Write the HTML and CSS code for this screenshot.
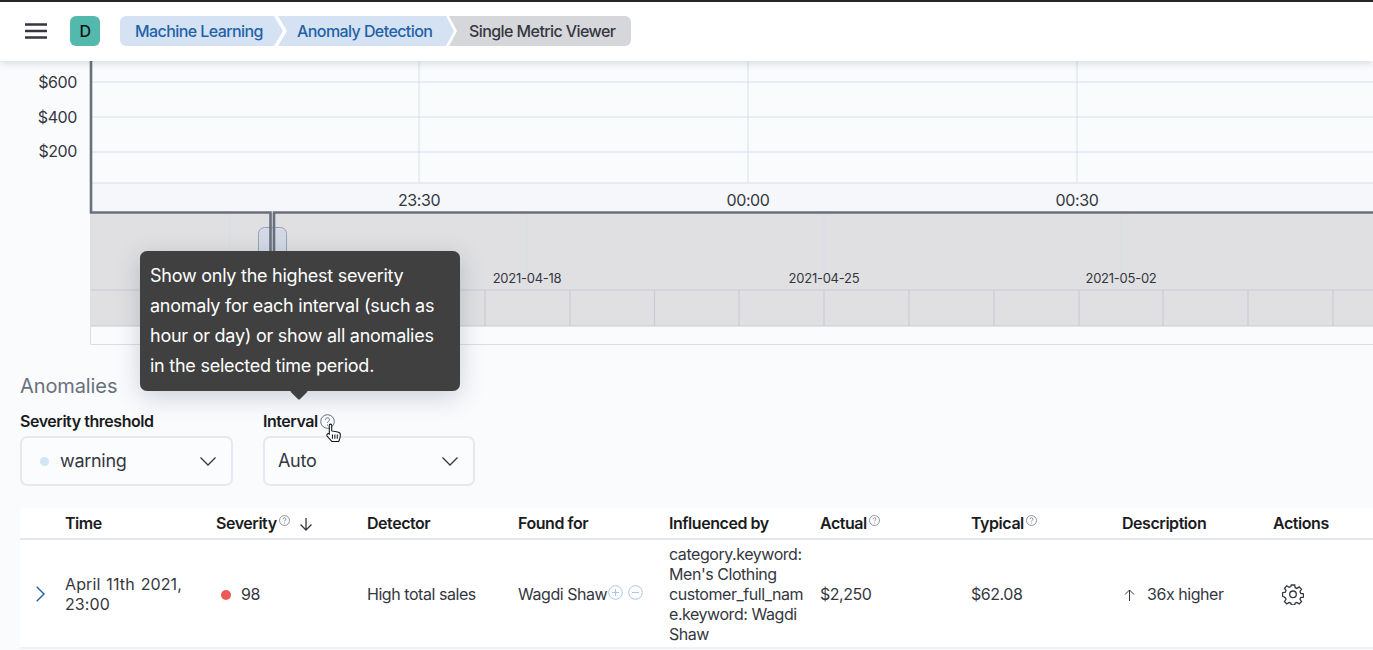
FILE: index.html
```html
<!DOCTYPE html>
<html lang="en">
<head>
  <meta charset="UTF-8" />
  <meta name="viewport" content="width=device-width, initial-scale=1" />
  <title>Single Metric Viewer</title>
  <link rel="stylesheet" href="styles.css">
</head>
<body>
  <header class="topbar">
    <svg class="menu-icon" width="22" height="16" viewBox="0 0 22 16"><path d="M0 1.500h22M0 8h22M0 14.500h22" /></svg>
    <div class="avatar">D</div>
    <nav class="crumbs">
      <a class="crumb crumb-first">Machine Learning</a>
      <a class="crumb crumb-mid">Anomaly Detection</a>
      <span class="crumb crumb-last">Single Metric Viewer</span>
    </nav>
  </header>

  <section class="chart">
    <svg class="chart-svg" width="1373" height="284" viewBox="0 61 1373 284">
      <rect class="ctx-bg" x="90" y="213" width="1283" height="113" />
      <rect class="axis-bg" x="91" y="183" width="1282" height="29" />
      <rect class="plot-bg" x="91" y="61" width="1282" height="122" />

      <path class="grid" d="M91 82H1373M91 117H1373M91 152H1373M91 183H1373M419 61V183M748 61V183M1077 61V183" />
      <path class="grid-faint" d="M230 213V290M527 213V290M824 213V290M1121 213V290" />
      <path class="grid-cell" d="M90 290H1373M90 326H1373M145 290V326M230 290V326M315 290V326M400 290V326M485 290V326M570 290V326M654.500 290V326M739 290V326M824 290V326M909 290V326M994 290V326M1079 290V326M1163 290V326M1248 290V326M1333 290V326" />
      <path class="grid" d="M90.500 290V344.500H1373" />

      <text class="tick tick-y" x="77" y="88">$600</text>
      <text class="tick tick-y" x="77" y="123">$400</text>
      <text class="tick tick-y" x="77" y="157">$200</text>
      <text class="tick tick-x" x="419" y="206">23:30</text>
      <text class="tick tick-x" x="748" y="206">00:00</text>
      <text class="tick tick-x" x="1077" y="206">00:30</text>
      <text class="tick-small" x="527" y="283">2021-04-18</text>
      <text class="tick-small" x="824" y="283">2021-04-25</text>
      <text class="tick-small" x="1121" y="283">2021-05-02</text>

      <rect class="handle" x="258.500" y="227.500" width="28" height="40" rx="6" />
      <path class="axis" d="M91 61V212.500H270.500V270M274 270V212.500H1373" />
    </svg>
  </section>

  <section class="anomalies">
    <h2 class="title">Anomalies</h2>
    <div class="filters">
      <div class="field">
        <label class="field-label">Severity threshold</label>
        <div class="select">
          <span class="dot-warning"></span>
          <span class="select-value">warning</span>
          <svg class="chevron" width="16" height="9" viewBox="0 0 16 9"><path d="M.5.500 8 8 15.500.5" /></svg>
        </div>
      </div>
      <div class="field">
        <label class="field-label">Interval<svg class="help help-big" width="15" height="15" viewBox="0 0 15 15"><circle cx="7.500" cy="7.500" r="6.800" /><path d="M5.500 5.800c0-1.200.9-2 2-2s2 .8 2 1.900c0 1.500-2 1.500-2 3.200M7.500 10.500v1" /></svg></label>
        <div class="select select-auto">
          <span class="select-value">Auto</span>
          <svg class="chevron" width="16" height="9" viewBox="0 0 16 9"><path d="M.5.500 8 8 15.500.5" /></svg>
        </div>
      </div>
    </div>

    <table class="results">
      <thead>
        <tr>
          <th class="col-toggle"></th>
          <th>Time</th>
          <th>Severity<svg class="help" width="11" height="11" viewBox="0 0 15 15"><circle cx="7.500" cy="7.500" r="6.800" /><path d="M5.500 5.800c0-1.200.9-2 2-2s2 .8 2 1.900c0 1.500-2 1.500-2 3.200M7.500 10.500v1" /></svg><svg class="sort-icon" width="14" height="14" viewBox="0 0 14 14"><path d="M7 1v12M1.500 7.500 7 13l5.500-5.500" /></svg></th>
          <th>Detector</th>
          <th>Found for</th>
          <th>Influenced by</th>
          <th>Actual<svg class="help" width="11" height="11" viewBox="0 0 15 15"><circle cx="7.500" cy="7.500" r="6.800" /><path d="M5.500 5.800c0-1.200.9-2 2-2s2 .8 2 1.900c0 1.500-2 1.500-2 3.200M7.500 10.500v1" /></svg></th>
          <th>Typical<svg class="help" width="11" height="11" viewBox="0 0 15 15"><circle cx="7.500" cy="7.500" r="6.800" /><path d="M5.500 5.800c0-1.200.9-2 2-2s2 .8 2 1.900c0 1.500-2 1.500-2 3.200M7.500 10.500v1" /></svg></th>
          <th>Description</th>
          <th>Actions</th>
        </tr>
      </thead>
      <tbody>
        <tr>
          <td class="col-toggle"><svg class="expand-icon" width="9" height="16" viewBox="0 0 9 16"><path d="M.7.700 8 8 .7 15.300" /></svg></td>
          <td class="cell-time">April 11th 2021, 23:00</td>
          <td><span class="dot-critical"></span>98</td>
          <td>High total sales</td>
          <td>Wagdi Shaw<svg class="filter-icon" width="15" height="15" viewBox="0 0 15 15"><circle cx="7.500" cy="7.500" r="6.800" /><path d="M7.500 4v7M4 7.500h7" /></svg><svg class="filter-icon" width="15" height="15" viewBox="0 0 15 15"><circle cx="7.500" cy="7.500" r="6.800" /><path d="M4 7.500h7" /></svg></td>
          <td class="influencers">category.keyword: Men's Clothing customer_full_name.keyword: Wagdi Shaw</td>
          <td>$2,250</td>
          <td>$62.08</td>
          <td><svg class="up-icon" width="11" height="12" viewBox="0 0 11 12"><path d="M5.500 12V1M1 5.500 5.500 1 10 5.500" /></svg>36x higher</td>
          <td><svg class="gear-icon" width="22" height="22" viewBox="0 0 22 22"><path d="M9.300 2h3.400l.5 2.700 1.700.7 2.300-1.500 2.300 2.400-1.500 2.200.7 1.800 2.800.5v3.300l-2.800.5-.7 1.700 1.500 2.300-2.300 2.300-2.300-1.500-1.700.7-.5 1.900H9.300l-.5-1.900-1.700-.7-2.300 1.500-2.300-2.300 1.500-2.300-.7-1.700L.5 13v-3.300l2.800-.5.7-1.800-1.500-2.200 2.300-2.400 2.300 1.500 1.700-.7z" /><circle cx="11" cy="11.300" r="3.300" /></svg></td>
        </tr>
      </tbody>
    </table>
  </section>

  <div class="tooltip">Show only the highest severity anomaly for each interval (such as hour or day) or show all anomalies in the selected time period.</div>
  <svg class="cursor" width="17" height="20" viewBox="0 0 16 19"><path d="M4 10V2.200c0-1.500 2.300-1.500 2.300 0V7.500l5.700 1c1.600.3 2.500 1 2.500 2.600 0 2.500-.5 4.500-1.500 6.500H6.500L2 12.500c-1.200-1.500.6-3.200 2-2z" /><path class="cursor-lines" d="M7 11v4M9.300 11v4M11.600 11v4" /></svg>
</body>
</html>
```

FILE: styles.css
```css
* {
  box-sizing: border-box;
}
html, body {
  margin: 0;
  height: 650px;
  overflow: hidden;
}
body {
  position: relative;
  font-family: Inter, "Liberation Sans", sans-serif;
  font-size: 16px;
  letter-spacing: -0.45px;
  color: #343741;
  background: #fafbfd;
}

/* top bar */
.topbar {
  position: relative;
  z-index: 2;
  display: flex;
  align-items: center;
  height: 61px;
  padding: 0 0 1px 25px;
  border-top: 2px solid #25262e;
  background: #fff;
  box-shadow: 0 2px 8px rgba(65, 78, 101, 0.2);
}
.menu-icon path {
  fill: none;
  stroke: #343741;
  stroke-width: 2.600;
}
.avatar {
  display: flex;
  align-items: center;
  justify-content: center;
  width: 30px;
  height: 30px;
  margin-left: 23px;
  border-radius: 6px;
  background: #54b9ad;
  color: #111;
  font-size: 16px;
  font-weight: 500;
}
.crumbs {
  display: flex;
  margin-left: 20px;
}
.crumb {
  display: flex;
  align-items: center;
  height: 30px;
  font-weight: 500;
  letter-spacing: -0.58px;
  line-height: 30px;
}
.crumb-first, .crumb-mid {
  color: #1f62a8;
  background: #d5e2f3;
}
.crumb-first {
  width: 163px;
  padding-left: 15px;
  border-radius: 6px 0 0 6px;
  clip-path: polygon(0 0, calc(100% - 9px) 0, 100% 50%, calc(100% - 9px) 100%, 0 100%);
}
.crumb-mid {
  width: 176px;
  margin-left: -5px;
  padding-left: 19px;
  clip-path: polygon(0 0, calc(100% - 8px) 0, 100% 50%, calc(100% - 8px) 100%, 0 100%, 9px 50%);
}
.crumb-last {
  width: 182px;
  margin-left: -5px;
  padding-left: 20px;
  color: #343741;
  background: #d6d7da;
  border-radius: 0 6px 6px 0;
  clip-path: polygon(0 0, 100% 0, 100% 100%, 0 100%, 8px 50%);
}

/* chart */
.chart {
  height: 284px;
}
.chart-svg {
  display: block;
}
.plot-bg {
  fill: #fafbfd;
}
.axis-bg {
  fill: #f5f7fa;
}
.ctx-bg {
  fill: #e0e0e2;
}
.grid {
  fill: none;
  stroke: #d9deea;
  stroke-width: 1;
}
.grid-faint {
  fill: none;
  stroke: #d8dce8;
}
.grid-cell {
  fill: none;
  stroke: #c9ccd6;
  stroke-width: 1.200;
}
.axis {
  fill: none;
  stroke: #69707d;
  stroke-width: 2.600;
}
.handle {
  fill: #d3dae6;
  stroke: #98a2b3;
}
.tick {
  font-size: 16px;
  letter-spacing: -0.4px;
  fill: #343741;
}
.tick-y {
  text-anchor: end;
}
.tick-x {
  text-anchor: middle;
}
.tick-small {
  font-size: 13px;
  letter-spacing: -0.25px;
  fill: #343741;
  text-anchor: middle;
}

/* anomalies */
.anomalies {
  padding-left: 20px;
}
.title {
  margin: 29px 0 0;
  font-size: 20px;
  font-weight: 400;
  letter-spacing: -0.1px;
  line-height: 24px;
  color: #69707d;
}
.filters {
  display: flex;
  gap: 30px;
  margin-top: 13px;
}
.field-label {
  display: flex;
  align-items: center;
  height: 20px;
  margin-bottom: 5px;
  font-weight: 600;
  color: #1a1c21;
}
.help {
  margin-left: 2px;
  fill: none;
  stroke: #69707d;
  stroke-width: 1;
  vertical-align: 3px;
}
.select {
  display: flex;
  align-items: center;
  width: 213px;
  height: 50px;
  padding: 0 15px 0 14px;
  border: 2px solid #e6e9f2;
  border-radius: 7px;
  background: #fbfcfd;
  font-size: 18px;
  letter-spacing: -0.3px;
}
.select-auto {
  width: 212px;
  padding-left: 13px;
}
.dot-warning {
  width: 9px;
  height: 9px;
  margin: 0 11px 0 4px;
  border-radius: 50%;
  background: #cfe6f5;
}
.select-value {
  flex: 1;
  padding-bottom: 1px;
}
.chevron path {
  fill: none;
  stroke: #343741;
  stroke-width: 1.300;
}
.results {
  width: 1353px;
  margin-top: 22px;
  border-collapse: collapse;
  table-layout: fixed;
  background: #fff;
}
.results th {
  height: 31px;
  padding: 0 16px 0 0;
  border-bottom: 2px solid #e3e7f0;
  text-align: left;
  font-weight: 600;
  color: #1a1c21;
  white-space: nowrap;
}
.results td {
  height: 109px;
  padding: 0 16px 0 0;
  border-bottom: 2px solid #f0f2f6;
  line-height: 20px;
}
.results th, .results td {
  width: 151px;
}
.results .col-toggle {
  width: 45px;
  padding-left: 16px;
}
.cell-time {
  letter-spacing: 0.1px;
  word-spacing: 1.400px;
}
.influencers {
  overflow-wrap: anywhere;
}
.sort-icon {
  margin-left: 9px;
  vertical-align: -2px;
  fill: none;
  stroke: #343741;
  stroke-width: 1.300;
}
.expand-icon {
  display: block;
  fill: none;
  stroke: #1f62a8;
  stroke-width: 1.400;
}
.dot-critical {
  display: inline-block;
  width: 10px;
  height: 10px;
  margin: 0 10px 0 5px;
  border-radius: 50%;
  background: #ee5a55;
}
.filter-icon {
  margin-left: 1px;
  vertical-align: 0;
  fill: none;
  stroke: #a9c6ea;
  stroke-width: 1;
}
.filter-icon + .filter-icon {
  margin-left: 5px;
}
.up-icon {
  margin: 0 12px 0 2px;
  fill: none;
  stroke: #343741;
  vertical-align: -1px;
}
.gear-icon {
  display: block;
  margin-left: 9px;
  fill: none;
  stroke: #343741;
  stroke-width: 1.300;
}

/* overlays */
.tooltip {
  position: absolute;
  left: 140px;
  top: 251px;
  z-index: 3;
  width: 320px;
  height: 140px;
  padding: 10px;
  border-radius: 7px;
  background: #404040;
  color: #fff;
  font-size: 18px;
  letter-spacing: -0.25px;
  line-height: 30px;
  box-shadow: 0 6px 24px rgba(65, 78, 101, 0.25);
}
.tooltip::after {
  content: "";
  position: absolute;
  left: 151px;
  bottom: -8px;
  width: 16px;
  height: 16px;
  border-radius: 2px;
  background: #404040;
  transform: rotate(45deg) scale(0.8);
}
.cursor {
  position: absolute;
  left: 325px;
  top: 423px;
  z-index: 4;
}
.cursor path {
  fill: #fff;
  stroke: #111;
  stroke-width: 1;
}
.cursor .cursor-lines {
  fill: none;
}
```
